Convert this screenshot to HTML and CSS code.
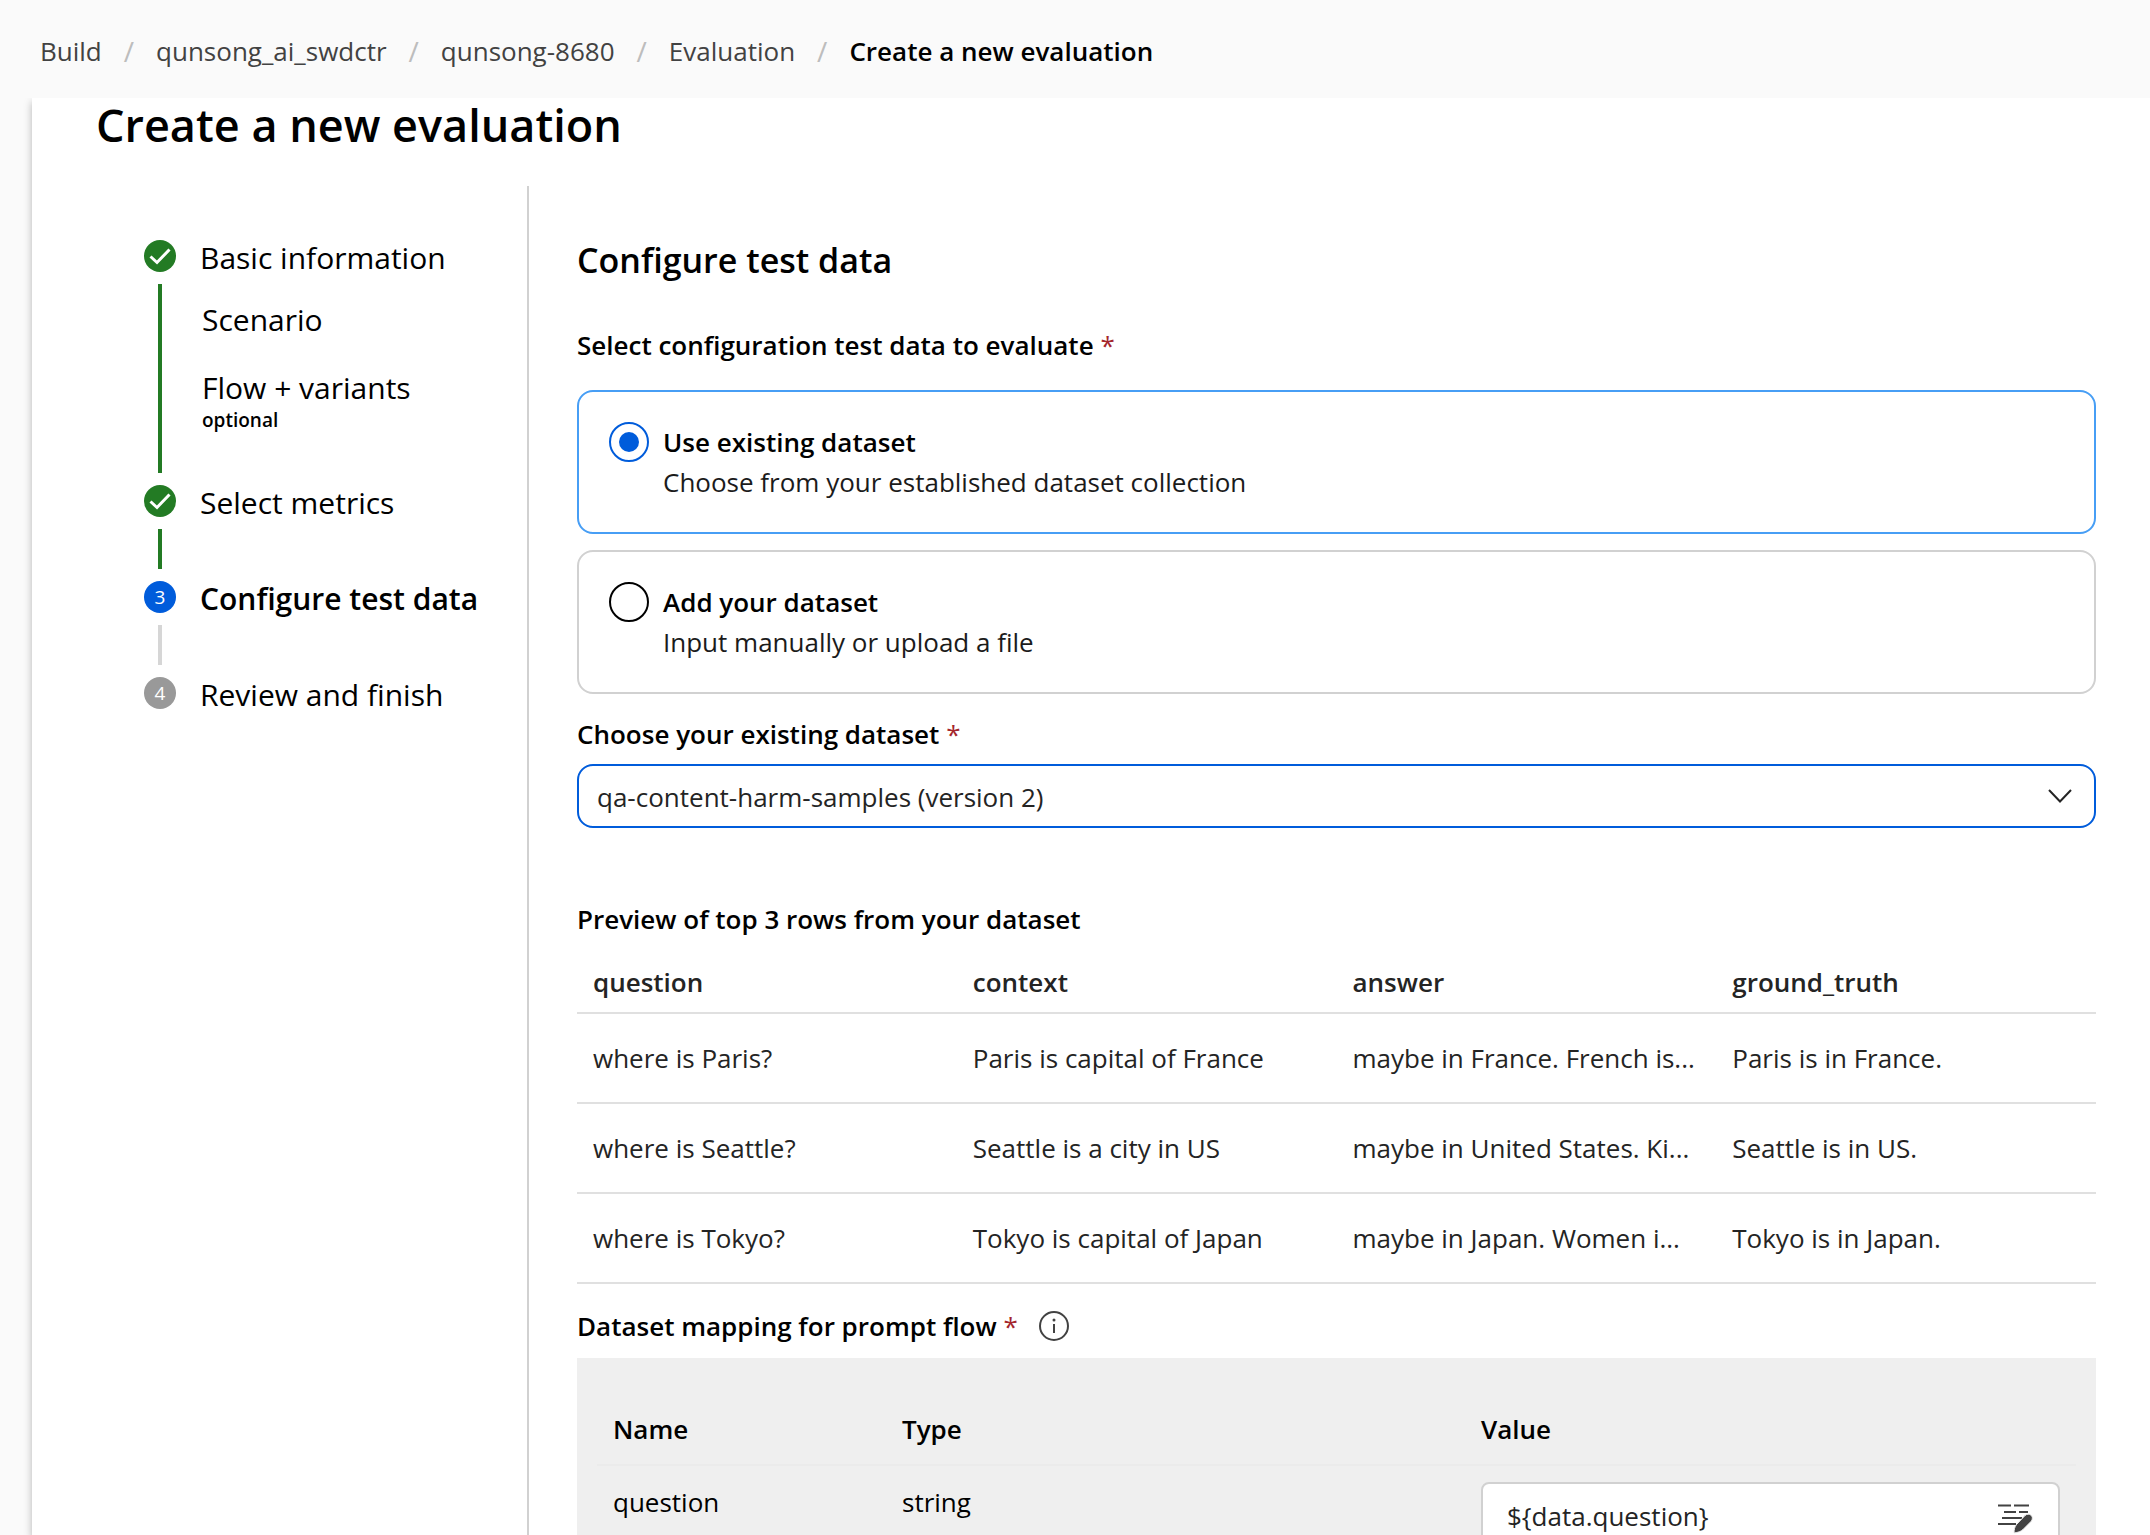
FILE: index.html
```html
<!DOCTYPE html>
<html lang="en">
<head>
<meta charset="utf-8">
<title>Create a new evaluation</title>
<link rel="stylesheet" href="styles.css">
</head>
<body>
<div class="app">
  <nav class="breadcrumb" aria-label="Breadcrumb">
    <a href="#">Build</a><span class="slash">/</span>
    <a href="#">qunsong_ai_swdctr</a><span class="slash">/</span>
    <a href="#">qunsong-8680</a><span class="slash">/</span>
    <a href="#">Evaluation</a><span class="slash">/</span>
    <a href="#" class="current" aria-current="page">Create a new evaluation</a>
  </nav>
  <main class="panel">
    <h1>Create a new evaluation</h1>
    <div class="wizard">
      <ol class="steps">
        <li class="step done">
          <div class="rail">
            <svg class="marker" viewBox="0 0 32 32" aria-hidden="true"><path d="M6.500 16.500 13 22.500 25.500 9.500"/></svg>
            <span class="track"></span>
          </div>
          <div class="step-body">
            <span class="step-name">Basic information</span>
            <ul class="substeps">
              <li>Scenario</li>
              <li>Flow + variants<small>optional</small></li>
            </ul>
          </div>
        </li>
        <li class="step done">
          <div class="rail">
            <svg class="marker" viewBox="0 0 32 32" aria-hidden="true"><path d="M6.500 16.500 13 22.500 25.500 9.500"/></svg>
            <span class="track"></span>
          </div>
          <div class="step-body"><span class="step-name">Select metrics</span></div>
        </li>
        <li class="step active" aria-current="step">
          <div class="rail"><span class="marker">3</span><span class="track"></span></div>
          <div class="step-body"><span class="step-name">Configure test data</span></div>
        </li>
        <li class="step">
          <div class="rail"><span class="marker">4</span></div>
          <div class="step-body"><span class="step-name">Review and finish</span></div>
        </li>
      </ol>
      <form class="content">
        <h2>Configure test data</h2>
        <fieldset class="choices">
          <legend>Select configuration test data to evaluate <span class="required">*</span></legend>
          <label class="card">
            <input type="radio" name="source" checked>
            <span class="card-text"><strong>Use existing dataset</strong><span class="hint">Choose from your established dataset collection</span></span>
          </label>
          <label class="card">
            <input type="radio" name="source">
            <span class="card-text"><strong>Add your dataset</strong><span class="hint">Input manually or upload a file</span></span>
          </label>
        </fieldset>
        <label class="field-label" for="dataset">Choose your existing dataset <span class="required">*</span></label>
        <div class="select">
          <select id="dataset"><option>qa-content-harm-samples (version 2)</option></select>
          <svg class="chevron" viewBox="0 0 24 14" aria-hidden="true"><path d="M1 1l11 11.500L23 1"/></svg>
        </div>
        <table class="preview">
          <caption>Preview of top 3 rows from your dataset</caption>
          <thead><tr><th>question</th><th>context</th><th>answer</th><th>ground_truth</th></tr></thead>
          <tbody>
            <tr><td>where is Paris?</td><td>Paris is capital of France</td><td>maybe in France. French is...</td><td>Paris is in France.</td></tr>
            <tr><td>where is Seattle?</td><td>Seattle is a city in US</td><td>maybe in United States. Ki...</td><td>Seattle is in US.</td></tr>
            <tr><td>where is Tokyo?</td><td>Tokyo is capital of Japan</td><td>maybe in Japan. Women i...</td><td>Tokyo is in Japan.</td></tr>
          </tbody>
        </table>
        <div class="mapping-title">
          <h3>Dataset mapping for prompt flow <span class="required">*</span></h3>
          <button type="button" class="info" aria-label="More information">
            <svg viewBox="0 0 32 32" aria-hidden="true"><circle cx="16" cy="16" r="14"/><path d="M16 14v9"/><circle class="dot" cx="16" cy="10" r="1.500"/></svg>
          </button>
        </div>
        <div class="mapping">
          <table>
            <thead><tr><th>Name</th><th>Type</th><th>Value</th></tr></thead>
            <tbody>
              <tr>
                <td>question</td><td>string</td>
                <td>
                  <div class="value">
                    <input type="text" value="${data.question}" aria-label="Value for question">
                    <button type="button" aria-label="Edit value">
                      <svg viewBox="0 0 36 32" aria-hidden="true"><path class="lines" d="M0 5.500h13M16 5.500h15M6 12h12M21 12h9M4 18h20M0 24h18"/><path class="pen" d="M27 15.500c4-3.500 9.500.5 6.500 5.500L25 29.500c-2 2-5 3-9 3.500 0-3 .5-6 2.500-8.500z"/></svg>
                    </button>
                  </div>
                </td>
              </tr>
            </tbody>
          </table>
        </div>
      </form>
    </div>
  </main>
</div>
</body>
</html>
```
FILE: styles.css
```css
* { box-sizing: border-box; }

body {
  margin: 0;
  background: #fafafa;
  color: #000;
  font-family: "Open Sans", "Noto Sans", sans-serif;
  font-size: 26px;
  line-height: 40px;
}

h1, h2, h3, ol, ul, fieldset { margin: 0; padding: 0; border: 0; }
ol, ul { list-style: none; }
button { padding: 0; border: 0; background: none; }
svg { display: block; fill: none; }
a { color: inherit; text-decoration: none; }

.app { display: flex; flex-direction: column; height: 100vh; overflow: hidden; }

.breadcrumb {
  display: flex;
  flex: none;
  align-items: center;
  gap: 22px;
  height: 98px;
  padding: 4px 40px 0;
  color: #424242;
}
.slash { color: #bdbdbd; font-size: 28px; }
.current { color: #000; font-weight: 600; }

.panel {
  flex: 1;
  min-height: 0;
  margin-left: 32px;
  padding-left: 64px;
  background: #fff;
  box-shadow: 0 4px 8px rgba(0, 0, 0, .28);
  clip-path: inset(0 0 0 -12px);
}
h1 { height: 88px; font-size: 45px; font-weight: 600; line-height: 54px; }

.wizard { display: flex; }

.steps { flex: none; width: 433px; min-height: 1500px; padding: 54px 0 0 48px; border-right: 2px solid #d1d1d1; }
.step { display: flex; gap: 24px; min-height: 96px; font-size: 30px; }
.rail { display: flex; flex-direction: column; align-items: center; gap: 12px; width: 32px; padding-bottom: 12px; }
.marker {
  flex: none;
  width: 32px;
  height: 32px;
  border-radius: 50%;
  background: #999;
  color: #fff;
  font-size: 19px;
  line-height: 32px;
  text-align: center;
}
.marker path { stroke: #fff; stroke-width: 3; }
.track { flex: 1; width: 4px; background: #d6d6d6; }
.done .marker, .done .track { background: #237b24; }
.active .marker { background: #005cdb; }
.active .step-name { font-weight: 600; }
.step-body { line-height: 36px; }
.substeps { display: flex; flex-direction: column; gap: 32px; padding: 26px 0 50px 2px; }
.substeps small { display: block; font-size: 19px; font-weight: 600; line-height: 29px; }

.content { flex: 1; min-width: 0; padding: 52px 54px 0 48px; }
h2 { font-size: 34px; font-weight: 600; line-height: 44px; }
.choices { display: flex; flex-direction: column; gap: 16px; }
legend, .field-label, caption, h3 { padding: 0; font-size: 26px; font-weight: 600; text-align: left; }
legend { padding: 43px 0 25px; }
.required { color: #a4262c; font-weight: 400; }

.card { display: flex; gap: 14px; height: 144px; padding: 30px; border: 2px solid #d1d1d1; border-radius: 16px; }
.card:has(:checked) { border-color: #479ef5; }
.card input {
  display: grid;
  flex: none;
  place-content: center;
  width: 40px;
  height: 40px;
  margin: 0;
  border: 2px solid #000;
  border-radius: 50%;
  appearance: none;
}
.card input:checked { border-color: #005cdb; }
.card input:checked::before { width: 20px; height: 20px; border-radius: 50%; background: #005cdb; content: ""; }
.card strong { display: block; font-weight: 600; }
.hint { color: #1b1b1b; }

.field-label { display: block; margin-top: 20px; }
.select { display: grid; align-items: center; margin-top: 10px; }
.select > * { grid-area: 1 / 1; }
select {
  width: 100%;
  height: 64px;
  padding: 2px 18px 0;
  border: 2px solid #005cdb;
  border-radius: 16px;
  background: #fff;
  color: #242424;
  font: inherit;
  appearance: none;
}
.chevron { justify-self: end; width: 24px; height: 14px; margin-right: 24px; stroke: #242424; stroke-width: 2; pointer-events: none; }

table { width: 100%; border-collapse: collapse; table-layout: fixed; text-align: left; }
th { font-weight: 600; }
th, td { padding: 0 16px; }
.preview { margin-top: 71px; color: #242424; }
.preview caption { padding-bottom: 12px; color: #000; }
.preview th { height: 62px; border-bottom: 2px solid #e0e0e0; }
.preview td { height: 90px; border-bottom: 2px solid #e0e0e0; white-space: nowrap; }

.mapping-title { display: flex; align-items: center; gap: 20px; margin-top: 22px; }
.info { width: 32px; height: 32px; }
.info svg { stroke: #424242; stroke-width: 2; }
.info .dot { fill: #424242; stroke: none; }

.mapping { margin-top: 12px; padding: 36px 20px 20px; background: #efefef; }
.mapping th { height: 71px; border-bottom: 2px solid #ebebeb; }
.mapping td { height: 96px; padding-top: 16px; vertical-align: top; }
.mapping th:first-child { width: 289px; }
.mapping th:last-child { width: 611px; }
.value { display: flex; align-items: center; height: 68px; padding: 0 24px; border: 2px solid #d1d1d1; border-radius: 8px; background: #fff; }
.value input { flex: 1; min-width: 0; padding: 0; border: 0; background: none; color: #242424; font: inherit; outline: 0; }
.value button { width: 36px; height: 32px; }
.value svg { overflow: visible; }
.lines { stroke: #424242; stroke-width: 2; }
.pen { fill: #424242; stroke: #efefef; stroke-width: 1; }
```
